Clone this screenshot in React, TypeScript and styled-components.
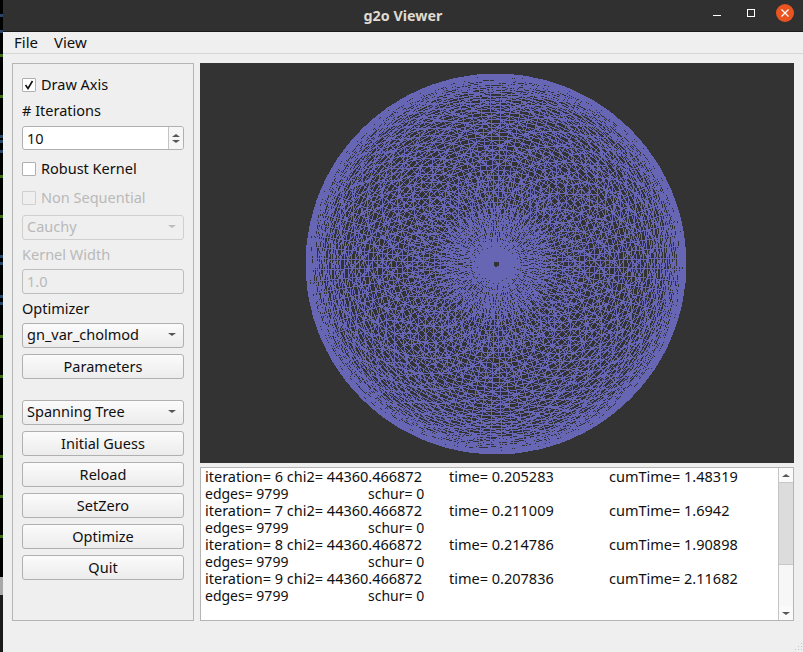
import { useMemo } from "react";
import styled, { createGlobalStyle } from "styled-components";

const Global = createGlobalStyle`
  html, body { margin: 0; padding: 0; background: #efefef; }
  body { font-family: "Noto Sans", "Open Sans", sans-serif; font-size: 14.5px; color: #101010; overflow: hidden; }
`;

const Screen = styled.div`
  display: flex;
  width: 803px;
  height: 652px;
  overflow: hidden;
  position: relative;
`;

const Window = styled.div`
  flex: 1;
  display: flex;
  flex-direction: column;
  min-width: 0;
  background: #efefef;
`;

const TitleBar = styled.div`
  height: 31px;
  flex: 0 0 31px;
  display: flex;
  align-items: center;
  justify-content: center;
  background: #303030;
  border-bottom: 1px solid #1a1a1a;
  position: relative;
  color: #dfdbd2;
  font-weight: 700;
  font-size: 14.3px;
`;

const WinButtons = styled.div`
  position: absolute;
  right: 9px;
  top: 4px;
  display: flex;
  align-items: center;
  gap: 16px;
`;

const MenuBar = styled.div`
  height: 21px;
  flex: 0 0 21px;
  display: flex;
  align-items: center;
  gap: 16px;
  padding-left: 11px;
  border-bottom: 1px solid #d6d6d6;
  font-size: 15px;
  line-height: 19px;
`;

const Body = styled.div`
  display: flex;
  gap: 6px;
  padding: 9px 0 0 9px;
`;

const Panel = styled.div`
  flex: 0 0 182px;
  box-sizing: border-box;
  height: 558px;
  border: 1px solid #b5b5b5;
  padding: 0 9px;
  display: flex;
  flex-direction: column;
`;

const Right = styled.div`
  display: flex;
  flex-direction: column;
  gap: 4px;
  flex: 0 0 594px;
`;

const Viewport = styled.div`
  height: 400px;
  background: #333333;
  line-height: 0;
`;

const Log = styled.div`
  height: 154px;
  box-sizing: border-box;
  border: 1px solid #b5b5b5;
  background: #fff;
  display: flex;
`;

const LogText = styled.div`
  flex: 1;
  padding-left: 4px;
`;

const LogRow = styled.div<{ $second?: boolean }>`
  display: grid;
  grid-template-columns: ${(p) => (p.$second ? "163px 1fr" : "244px 160px 1fr")};
  height: 17px;
  line-height: 17px;
  font-size: ${(p) => (p.$second ? 14 : 14.5)}px;
  white-space: nowrap;
`;

const ScrollBar = styled.div`
  width: 14px;
  border-left: 1px solid #c4c4c4;
  display: flex;
  flex-direction: column;
  background: #f7f7f7;
`;

const ScrollButton = styled.div`
  height: 14px;
  flex: 0 0 14px;
  display: flex;
  align-items: center;
  justify-content: center;
  background: #fafafa;
`;

const ScrollThumb = styled.div`
  height: 81px;
  background: #dcdcdc;
  border-top: 1px solid #c8c8c8;
  border-bottom: 1px solid #c8c8c8;
`;

const ScrollRest = styled.div`
  flex: 1;
`;

const Arrow = styled.span<{ $up?: boolean; $off?: boolean; $size?: number }>`
  width: 0;
  height: 0;
  border-left: ${(p) => p.$size ?? 5}px solid transparent;
  border-right: ${(p) => p.$size ?? 5}px solid transparent;
  ${(p) => (p.$up ? "border-bottom" : "border-top")}: ${(p) => (p.$size ?? 5) - 1}px solid ${(p) => (p.$off ? "#bcbcbc" : "#555")};
`;

const Line = styled.div<{ $top: number; $off?: boolean }>`
  margin-top: ${(p) => p.$top}px;
  height: 20px;
  line-height: 18px;
  color: ${(p) => (p.$off ? "#b9b9b9" : "#101010")};
  display: flex;
  align-items: flex-start;
  gap: 5px;
  white-space: nowrap;
`;

const CheckBox = styled.span<{ $off?: boolean }>`
  width: 12px;
  height: 12px;
  margin-top: 3px;
  border: 1px solid ${(p) => (p.$off ? "#d0d0d0" : "#b0b0b0")};
  background: ${(p) => (p.$off ? "transparent" : "#fff")};
  border-radius: 1px;
  display: flex;
  align-items: center;
  justify-content: center;
`;

const Field = styled.div<{ $top: number; $off?: boolean }>`
  margin-top: ${(p) => p.$top}px;
  height: ${(p) => (p.$off ? 25 : 24)}px;
  box-sizing: border-box;
  border: 1px solid ${(p) => (p.$off ? "#bdbdbd" : "#b0b0b0")};
  border-radius: 3px;
  background: ${(p) => (p.$off ? "#efefef" : "#fff")};
  color: ${(p) => (p.$off ? "#b9b9b9" : "#101010")};
  padding-left: 4px;
  line-height: 22px;
  display: flex;
  justify-content: space-between;
`;

const SpinBox = styled.div`
  width: 14px;
  border-left: 1px solid #c4c4c4;
  display: flex;
  flex-direction: column;
  align-items: center;
  justify-content: center;
  gap: 3px;
  background: #f6f6f6;
  border-radius: 0 3px 3px 0;
`;

const Combo = styled.div<{ $top: number; $off?: boolean }>`
  margin-top: ${(p) => p.$top}px;
  height: 25px;
  box-sizing: border-box;
  border: 1px solid ${(p) => (p.$off ? "#cfcfcf" : "#b0b0b0")};
  border-radius: 3px;
  background: ${(p) => (p.$off ? "#efefef" : "linear-gradient(#fbfbfb, #ececec)")};
  color: ${(p) => (p.$off ? "#b9b9b9" : "#101010")};
  padding: 0 7px 2px 4px;
  line-height: 21px;
  display: flex;
  align-items: center;
  justify-content: space-between;
`;

const Button = styled.div<{ $top: number }>`
  margin-top: ${(p) => p.$top}px;
  height: 25px;
  box-sizing: border-box;
  border: 1px solid #b0b0b0;
  border-radius: 3px;
  background: linear-gradient(#fbfbfb, #ececec);
  text-align: center;
  line-height: 23px;
`;

const Grip = styled.svg`
  position: absolute;
  right: 0;
  bottom: 0;
`;

const Sliver = styled.svg`
  flex: 0 0 3px;
  display: block;
  background: #000;
`;

function buildMesh() {
  const cx = 296;
  const cy = 201;
  const R = 190;
  const n = 50;
  const pt = (i: number, j: number) => {
    const t = (Math.PI * (i + 0.25)) / n;
    // the far half of the sphere sits half a step round from the near half
    const a = (2 * Math.PI * (j + (i >= n / 2 ? 0.5 : 0))) / n + 0.03;
    const r = R * Math.sin(t);
    return `${(cx + r * Math.cos(a)).toFixed(1)} ${(cy + r * Math.sin(a)).toFixed(1)}`;
  };
  const parts: string[] = [];
  const seg = (i: number, j: number, i2: number, j2: number) => {
    if (i2 >= n) return;
    parts.push(`M${pt(i, j)}L${pt(i2, j2)}`);
  };
  for (let i = 0; i < n; i++) {
    for (let j = 0; j < n; j++) {
      seg(i, j, i, j + 1);
      seg(i, j, i + 1, j);
      seg(i, j, i + 1, j + ((i + j) % 2 ? 1 : -1));
      if ((i * 7 + j * 3) % 3 === 0) seg(i, j, i + 2, j + 1);
    }
  }
  return parts.join("");
}

const entries = [
  ["iteration= 6 chi2= 44360.466872", "time= 0.205283", "cumTime= 1.48319"],
  ["iteration= 7 chi2= 44360.466872", "time= 0.211009", "cumTime= 1.6942"],
  ["iteration= 8 chi2= 44360.466872", "time= 0.214786", "cumTime= 1.90898"],
  ["iteration= 9 chi2= 44360.466872", "time= 0.207836", "cumTime= 2.11682"],
];

const sliverMarks = [
  [14, "#24476b"], [30, "#24476b"], [54, "#3f6b12"], [95, "#3f6b12"], [135, "#24476b"], [140, "#24476b"],
  [150, "#24476b"], [175, "#3f6b12"], [215, "#3f6b12"], [255, "#24476b"], [262, "#24476b"], [295, "#24476b"],
  [302, "#24476b"], [335, "#3f6b12"], [375, "#3f6b12"], [415, "#3f6b12"], [455, "#3f6b12"], [495, "#3f6b12"], [535, "#3f6b12"],
] as const;

export default function App() {
  const mesh = useMemo(buildMesh, []);
  return (
    <Screen>
      <Global />
      <Sliver width="3" height="652">
        {sliverMarks.map(([y, c]) => (
          <rect key={y} x="0" y={y} width="3" height="3" fill={c} />
        ))}
        <rect x="0" y="577" width="3" height="18" fill="#a8a8a8" />
        <rect x="0" y="595" width="3" height="57" fill="#1b1b1b" />
      </Sliver>
      <Window>
        <TitleBar>
          g2o Viewer
          <WinButtons>
            <svg width="18" height="18" viewBox="0 0 18 18">
              <rect x="5" y="11" width="8" height="1" fill="#fff" />
            </svg>
            <svg width="18" height="18" viewBox="0 0 18 18">
              <rect x="5.5" y="5.5" width="7" height="7" fill="none" stroke="#fff" />
            </svg>
            <svg width="18" height="18" viewBox="0 0 18 18" style={{ overflow: "visible" }}>
              <circle cx="9" cy="9" r="9" fill="#e95420" />
              <path d="M5.5 5.5l7 7M12.5 5.5l-7 7" stroke="#fff" strokeWidth="1.3" />
            </svg>
          </WinButtons>
        </TitleBar>
        <MenuBar>
          <span>File</span>
          <span>View</span>
        </MenuBar>
        <Body>
          <Panel>
            <Line $top={11}>
              <CheckBox>
                <svg width="10" height="10" viewBox="0 0 10 10">
                  <path d="M1.5 5l2.5 3.5L8.5 1" fill="none" stroke="#111" strokeWidth="1.6" />
                </svg>
              </CheckBox>
              Draw Axis
            </Line>
            <Line $top={6}># Iterations</Line>
            <Field $top={5}>
              10
              <SpinBox>
                <Arrow $up $size={4} />
                <Arrow $size={4} />
              </SpinBox>
            </Field>
            <Line $top={9}>
              <CheckBox />
              Robust Kernel
            </Line>
            <Line $top={9} $off>
              <CheckBox $off />
              Non Sequential
            </Line>
            <Combo $top={7} $off>
              Cauchy
              <Arrow $off $size={4} />
            </Combo>
            <Line $top={5} $off>Kernel Width</Line>
            <Field $top={4} $off>1.0</Field>
            <Line $top={5}>Optimizer</Line>
            <Combo $top={4}>
              gn_var_cholmod
              <Arrow $size={4} />
            </Combo>
            <Button $top={6}>Parameters</Button>
            <Combo $top={21}>
              Spanning Tree
              <Arrow $size={4} />
            </Combo>
            <Button $top={6}>Initial Guess</Button>
            <Button $top={6}>Reload</Button>
            <Button $top={6}>SetZero</Button>
            <Button $top={6}>Optimize</Button>
            <Button $top={6}>Quit</Button>
          </Panel>
          <Right>
            <Viewport>
              <svg width="594" height="400" viewBox="0 0 594 400">
                <path d={mesh} fill="none" stroke="#6666b4" strokeWidth="1" shapeRendering="crispEdges" />
                <rect x="295" y="199" width="4" height="4" fill="#333" />
              </svg>
            </Viewport>
            <Log>
              <LogText>
                {entries.map((e) => (
                  <div key={e[0]}>
                    <LogRow>
                      <span>{e[0]}</span>
                      <span>{e[1]}</span>
                      <span>{e[2]}</span>
                    </LogRow>
                    <LogRow $second>
                      <span>edges= 9799</span>
                      <span>schur= 0</span>
                    </LogRow>
                  </div>
                ))}
              </LogText>
              <ScrollBar>
                <ScrollButton><Arrow $up $size={4} /></ScrollButton>
                <ScrollThumb />
                <ScrollRest />
                <ScrollButton><Arrow $size={4} /></ScrollButton>
              </ScrollBar>
            </Log>
          </Right>
        </Body>
      </Window>
      <Grip width="10" height="10" viewBox="0 0 10 10">
        <path d="M8 1h1v1H8zM5 4h1v1H5zM8 4h1v1H8zM2 7h1v1H2zM5 7h1v1H5zM8 7h1v1H8z" fill="#c4c4c4" />
      </Grip>
    </Screen>
  );
}
